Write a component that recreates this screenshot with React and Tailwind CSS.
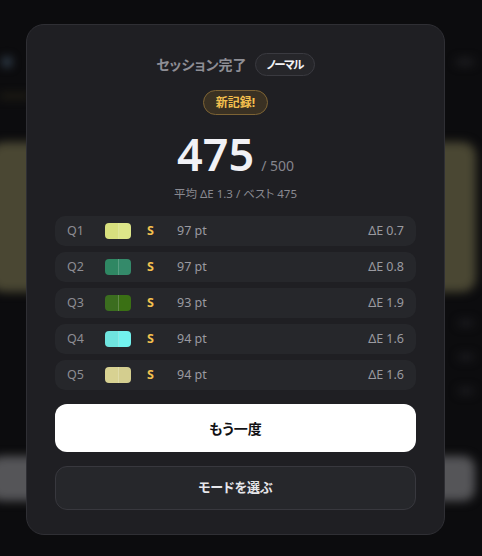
import React from 'react';

const ROWS = [
  { q: 'Q1', a: '#d8e07e', b: '#dde689', pt: 97, de: '0.7' },
  { q: 'Q2', a: '#2f8763', b: '#348a6a', pt: 97, de: '0.8' },
  { q: 'Q3', a: '#3b6d1f', b: '#3a7014', pt: 93, de: '1.9' },
  { q: 'Q4', a: '#6fe4df', b: '#72f2ee', pt: 94, de: '1.6' },
  { q: 'Q5', a: '#d8d292', b: '#d4ce8f', pt: 94, de: '1.6' },
];

function Backdrop() {
  return (
    <div className="blur-[5px] pointer-events-none select-none">
      <div className="h-[52px]" />
      <div className="flex items-center justify-between h-[20px] pl-[2px] pr-[8px]">
        <div className="w-[10px] h-[10px] rounded-full bg-[#3a4a5a]" />
        <div className="w-[18px] h-[6px] rounded bg-[#222226]" />
      </div>
      <div className="h-[22px]" />
      <div className="h-[4px] w-[30px] bg-[#2a2618]" />
      <div className="h-[44px]" />
      <div className="-ml-[10px] mr-[6px] h-[150px] rounded-[14px] bg-[#4a4733]" />
      <div className="h-[28px]" />
      <div className="flex flex-col items-end gap-[28px] pr-[8px]">
        <div className="w-[16px] h-[6px] rounded bg-[#1e1e22]" />
        <div className="w-[16px] h-[6px] rounded bg-[#1e1e22]" />
        <div className="w-[16px] h-[6px] rounded bg-[#1e1e22]" />
      </div>
      <div className="h-[62px]" />
      <div className="-ml-[10px] mr-[7px] h-[45px] rounded-[12px] bg-[#555558]" />
    </div>
  );
}

function Swatch({ a, b }) {
  return (
    <div className="flex w-[26px] h-[16px] rounded-[4px] overflow-hidden">
      <div className="flex-1 border-r border-white/20" style={{ backgroundColor: a }} />
      <div className="flex-1" style={{ backgroundColor: b }} />
    </div>
  );
}

export default function App() {
  return (
    <div
      className="relative w-full h-[556px] overflow-hidden bg-[#0c0c0e] [font-feature-settings:'palt']"
      style={{ fontFamily: '"Noto Sans", "Noto Sans CJK JP", sans-serif' }}
    >
      <Backdrop />
      <div className="absolute inset-0 pl-[26px] pt-[24px]">
        <div className="w-[419px] h-[511px] rounded-[18px] border border-[#2f2f34] bg-[#1f1f23] px-[28px] pt-[28px] pb-[24px] flex flex-col">
          <div className="flex items-center justify-center gap-[8px] h-[23px]">
            <span className="text-[14px] font-bold text-[#8e8e95]">セッション完了</span>
            <span className="h-[23px] px-[11px] flex items-center rounded-full border border-[#3a3a40] bg-[#26262a] text-[11.5px] font-bold tracking-[-1.5px] text-[#f2f2f5]">
              ノーマル
            </span>
          </div>
          <div className="flex justify-center mt-[14px]">
            <span className="h-[25px] px-[12px] flex items-center rounded-full border border-[#7d6334] bg-[#3a3123] text-[12px] font-bold text-[#f4c04e]">
              新記録!
            </span>
          </div>
          <div className="flex items-baseline justify-center gap-[7px] mt-[16px] leading-none">
            <span className="text-[45px] font-semibold text-[#f1f1f5]">475</span>
            <span className="text-[14px] text-[#85858c]">/ 500</span>
          </div>
          <div className="text-center text-[11.5px] text-[#8a8a91] mt-[9px]">
            平均 ΔE 1.3 / ベスト 475
          </div>
          <div className="flex flex-col gap-[6px] mt-[14px]">
            {ROWS.map((r) => (
              <div key={r.q} className="flex items-center h-[30px] rounded-[10px] bg-[#26272b] px-[12px] text-[12.5px]">
                <span className="w-[38px] text-[#8d8d93]">{r.q}</span>
                <Swatch a={r.a} b={r.b} />
                <span className="w-[30px] ml-[16px] font-bold text-[#f2c04f]">S</span>
                <span className="text-[#9a9aa0]">{r.pt} pt</span>
                <span className="ml-auto text-[#9a9aa0]">ΔE {r.de}</span>
              </div>
            ))}
          </div>
          <button className="mt-[14px] h-[48px] w-full rounded-[12px] bg-white text-[14px] font-bold text-[#111114]">
            もう一度
          </button>
          <button className="mt-[14px] h-[44px] w-full rounded-[12px] border border-[#38383e] bg-[#26272b] text-[13px] font-bold text-[#e6e6ea]">
            モードを選ぶ
          </button>
        </div>
      </div>
    </div>
  );
}
